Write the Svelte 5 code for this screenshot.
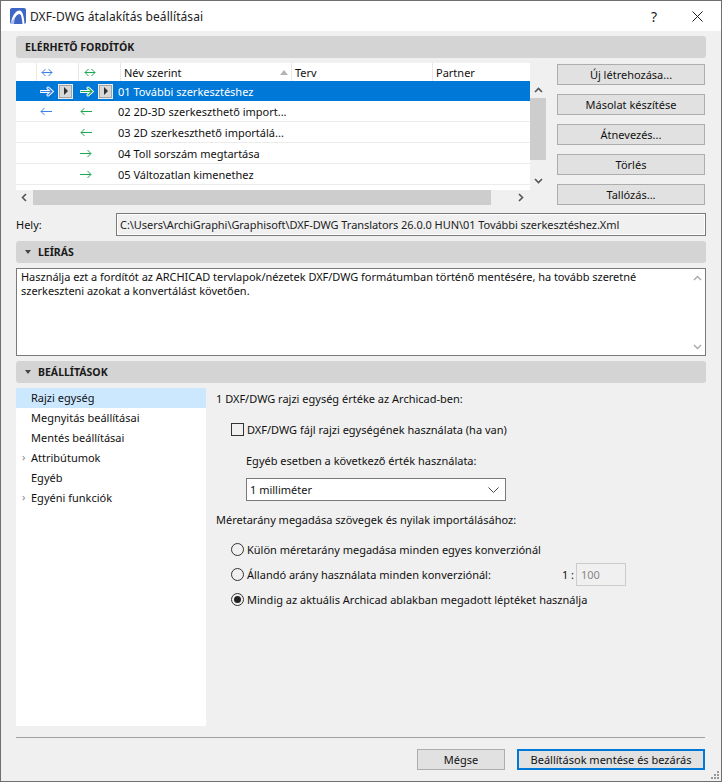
<script>
  const rows = [
    { name: '01 További szerkesztéshez', left: 'both', right: 'out', selected: true },
    { name: '02 2D-3D szerkeszthető import...', left: 'in', right: 'in' },
    { name: '03 2D szerkeszthető importálá...', left: '', right: 'in' },
    { name: '04 Toll sorszám megtartása', left: '', right: 'out' },
    { name: '05 Változatlan kimenethez', left: '', right: 'out' },
  ];
  const actions = ['Új létrehozása...', 'Másolat készítése', 'Átnevezés...', 'Törlés', 'Tallózás...'];
  const nav = [
    { label: 'Rajzi egység', active: true },
    { label: 'Megnyitás beállításai' },
    { label: 'Mentés beállításai' },
    { label: 'Attribútumok', more: true },
    { label: 'Egyéb' },
    { label: 'Egyéni funkciók', more: true },
  ];
</script>

{#snippet arrow(dir, color)}
  <svg class="arrow" width="12" height="9" viewBox="0 0 12 9" fill="none" stroke={color} stroke-width="1">
    {#if dir === 'in'}
      <path d="M1 4.5h11M4.5 1 1 4.5 4.5 8" />
    {:else if dir === 'out'}
      <path d="M0 4.5h11M7.5 1 11 4.5 7.5 8" />
    {:else}
      <path d="M1 4.5h10M4.5 1 1 4.5 4.5 8M7.5 1 11 4.5 7.5 8" />
    {/if}
  </svg>
{/snippet}

{#snippet fat(color)}
  <svg class="arrow" width="14" height="11" viewBox="0 0 14 11" fill="none" stroke-linecap="round">
    <path d="M1 5.5h10M8 2l4 3.5L8 9" stroke="#fff" stroke-width="3" />
    <path d="M1 5.5h10M8 2l4 3.5L8 9" stroke={color} stroke-width="1.2" />
  </svg>
{/snippet}

{#snippet play()}
  <span class="play"><i></i></span>
{/snippet}

<div class="window">
  <header class="titlebar">
    <svg class="logo" width="16" height="16" viewBox="0 0 16 16">
      <rect width="16" height="16" rx="2" fill="#3f66c4" />
      <path d="M1 16C2 7 6 2.5 9.5 2.5 12.5 2.5 14 8 14.5 16h-2C12 10 11 6 9.5 6 7 6 4 10 3 16Z" fill="#fff" />
      <path d="M0 16 5 9 4 16Z" fill="#a9bdea" />
    </svg>
    <span class="title">DXF-DWG átalakítás beállításai</span>
    <span class="help">?</span>
    <svg class="close" width="11" height="11" viewBox="0 0 11 11" fill="none" stroke="#222" stroke-width="1">
      <path d="M.5.5l10 10M10.5.5l-10 10" />
    </svg>
  </header>

  <main class="body">
    <div class="section plain">ELÉRHETŐ FORDÍTÓK</div>

    <div class="translators">
      <div class="list-wrap">
        <div class="list">
          <div class="thead">
            <span class="th c1"></span>
            <span class="th c2">{@render arrow('both', '#3b82e8')}</span>
            <span class="th c3">{@render arrow('both', '#1aa850')}</span>
            <span class="th c4">Név szerint<span class="sort"></span></span>
            <span class="th c5">Terv</span>
            <span class="th c6">Partner</span>
          </div>
          {#each rows as row}
            <div class="row" class:selected={row.selected}>
              <span class="cell-a">
                {#if row.selected}
                  {@render fat('#3b82e8')}{@render play()}
                {:else if row.left}
                  {@render arrow(row.left, '#3b82e8')}
                {/if}
              </span>
              <span class="cell-b">
                {#if row.selected}
                  {@render fat('#1aa850')}{@render play()}
                {:else}
                  {@render arrow(row.right, '#1aa850')}
                {/if}
              </span>
              <span class="name">{row.name}</span>
            </div>
          {/each}
        </div>
        <div class="vscroll">
          <svg width="9" height="6" viewBox="0 0 9 6" fill="none" stroke="#555" stroke-width="1.6"><path d="M1 5l3.5-3.5L8 5" /></svg>
          <div class="vtrack"><div class="vthumb"></div></div>
          <svg width="9" height="6" viewBox="0 0 9 6" fill="none" stroke="#555" stroke-width="1.6"><path d="M1 1l3.5 3.5L8 1" /></svg>
        </div>
        <div class="hscroll">
          <svg width="6" height="9" viewBox="0 0 6 9" fill="none" stroke="#555" stroke-width="1.6"><path d="M5 1 1.5 4.5 5 8" /></svg>
          <div class="hthumb"></div>
          <svg width="6" height="9" viewBox="0 0 6 9" fill="none" stroke="#555" stroke-width="1.6"><path d="M1 1l3.5 3.5L1 8" /></svg>
        </div>
      </div>
      <div class="actions">
        {#each actions as action}
          <button class="btn">{action}</button>
        {/each}
      </div>
    </div>

    <div class="location">
      <span class="location-label">Hely:</span>
      <div class="path">C:\Users\ArchiGraphi\Graphisoft\DXF-DWG Translators 26.0.0 HUN\01 További szerkesztéshez.Xml</div>
    </div>

    <div class="section"><span class="tri"></span>LEÍRÁS</div>
    <div class="desc">
      <p>Használja ezt a fordítót az ARCHICAD tervlapok/nézetek DXF/DWG formátumban történő mentésére, ha tovább szeretné szerkeszteni azokat a konvertálást követően.</p>
      <div class="desc-scroll">
        <svg width="9" height="6" viewBox="0 0 9 6" fill="none" stroke="#a8a8a8" stroke-width="1.4"><path d="M1 5l3.5-3.5L8 5" /></svg>
        <svg width="9" height="6" viewBox="0 0 9 6" fill="none" stroke="#a8a8a8" stroke-width="1.4"><path d="M1 1l3.5 3.5L8 1" /></svg>
      </div>
    </div>

    <div class="section"><span class="tri"></span>BEÁLLÍTÁSOK</div>
    <div class="settings">
      <nav class="nav">
        {#each nav as item}
          <div class="nav-item" class:active={item.active}>
            {#if item.more}<span class="chev">›</span>{/if}{item.label}
          </div>
        {/each}
      </nav>
      <div class="form">
        <div class="line">1 DXF/DWG rajzi egység értéke az Archicad-ben:</div>
        <div class="line check-line"><span class="check"></span>DXF/DWG fájl rajzi egységének használata (ha van)</div>
        <div class="line other">Egyéb esetben a következő érték használata:</div>
        <div class="select">
          <span>1 milliméter</span>
          <svg width="11" height="6" viewBox="0 0 11 6" fill="none" stroke="#444" stroke-width="1"><path d="M.5.5l5 5 5-5" /></svg>
        </div>
        <div class="line scale">Méretarány megadása szövegek és nyilak importálásához:</div>
        <div class="line radio-line first"><span class="radio"></span>Külön méretarány megadása minden egyes konverziónál</div>
        <div class="line radio-line">
          <span class="radio"></span>Állandó arány használata minden konverziónál:
          <span class="ratio">1 :</span><span class="ratio-input">100</span>
        </div>
        <div class="line radio-line"><span class="radio on"></span>Mindig az aktuális Archicad ablakban megadott léptéket használja</div>
      </div>
    </div>

    <footer class="footer">
      <button class="btn cancel">Mégse</button>
      <button class="btn primary">Beállítások mentése és bezárás</button>
    </footer>
    <svg class="grip" width="9" height="9" viewBox="0 0 9 9" fill="#9a9a9a">
      <rect x="6" y="0" width="2" height="2" /><rect x="3" y="3" width="2" height="2" /><rect x="6" y="3" width="2" height="2" />
      <rect x="0" y="6" width="2" height="2" /><rect x="3" y="6" width="2" height="2" /><rect x="6" y="6" width="2" height="2" />
    </svg>
  </main>
</div>

<style>
  :global(body) {
    margin: 0;
    background: #f0f0f0;
  }

  .window {
    position: relative;
    box-sizing: border-box;
    width: 722px;
    height: 782px;
    border: 1px solid #6f6f6f;
    background: #f0f0f0;
    font-family: "Noto Sans", "Open Sans", sans-serif;
    font-size: 11px;
    line-height: 15px;
    color: #111;
    overflow: hidden;
  }

  .titlebar {
    display: flex;
    align-items: center;
    height: 30px;
    background: #fff;
    padding-left: 9px;
  }

  .logo {
    margin-right: 4px;
  }

  .title {
    flex: 1;
    font-size: 12px;
    letter-spacing: 0.07px;
    color: #222;
  }

  .help {
    font-size: 14px;
    margin-right: 35px;
    color: #222;
  }

  .close {
    margin-right: 18px;
  }

  .body {
    padding: 5px 15px 0;
  }

  .section {
    display: flex;
    align-items: center;
    height: 22px;
    background: #d4d4d4;
    border-radius: 3px;
    padding-left: 9px;
    font-weight: 700;
    font-size: 10.5px;
    color: #1a1a1a;
  }

  .tri {
    width: 0;
    height: 0;
    margin-right: 7px;
    border: 3.5px solid transparent;
    border-top: 4px solid #444;
    border-bottom: 0;
  }

  .translators {
    display: flex;
    justify-content: space-between;
    margin-top: 5px;
  }

  .list-wrap {
    display: grid;
    grid-template-columns: 514px 16px;
    grid-template-rows: 127px 15px;
  }

  .list {
    background: #fff;
    overflow: hidden;
  }

  .thead {
    display: flex;
    height: 18px;
  }

  .th {
    box-sizing: border-box;
    display: flex;
    align-items: center;
    border-right: 1px solid #e8e8e8;
    padding-left: 3px;
    position: relative;
  }

  .c1 { width: 21px; }
  .c2 { width: 42px; padding-left: 4px; }
  .c3 { width: 42px; padding-left: 5px; }
  .c4 { width: 171px; }
  .c5 { width: 141px; }
  .c6 { width: 95px; border-right: 0; }

  .sort {
    position: absolute;
    right: 3px;
    top: 7px;
    border: 4.5px solid transparent;
    border-bottom: 5px solid #b4b4b4;
    border-top: 0;
  }

  .row {
    box-sizing: border-box;
    display: flex;
    align-items: center;
    height: 21px;
    border-bottom: 1px solid #ececec;
  }

  .row.selected {
    height: 20px;
    background: #0078d7;
    border-bottom: 0;
    color: #fff;
  }

  .cell-a {
    display: flex;
    align-items: center;
    gap: 4px;
    width: 61px;
    padding-left: 24px;
    box-sizing: border-box;
  }

  .cell-b {
    display: flex;
    align-items: center;
    gap: 4px;
    width: 41px;
    box-sizing: border-box;
    padding-left: 3px;
  }

  .name {
    white-space: nowrap;
  }

  .play {
    box-sizing: border-box;
    display: flex;
    align-items: center;
    justify-content: center;
    width: 15px;
    height: 15px;
    background: #d8d8d8;
    border: 1px solid #ececec;
    box-shadow: inset 0 0 0 1px #a4a4a4;
    flex: none;
  }

  .play i {
    border: 4.5px solid transparent;
    border-left: 4px solid #333;
    border-right: 0;
  }

  .vscroll {
    display: flex;
    flex-direction: column;
    align-items: center;
    justify-content: space-between;
    padding: 24px 0 6px;
    box-sizing: border-box;
    height: 127px;
  }

  .vtrack {
    flex: 1;
    width: 100%;
    margin-top: 5px;
  }

  .vthumb {
    width: 100%;
    height: 62px;
    background: #cdcdcd;
  }

  .hscroll {
    display: flex;
    align-items: center;
    height: 15px;
    padding-left: 5px;
    padding-right: 4px;
    box-sizing: border-box;
  }

  .hthumb {
    width: 458px;
    height: 15px;
    background: #cdcdcd;
    margin: 0 27px 0 6px;
  }

  .actions {
    display: flex;
    flex-direction: column;
    gap: 9px;
    padding-top: 1px;
    margin-right: 1px;
  }

  .btn {
    box-sizing: border-box;
    width: 148px;
    height: 21px;
    padding: 0;
    background: #e1e1e1;
    border: 1px solid #adadad;
    font: inherit;
    color: #111;
  }

  .location {
    display: flex;
    align-items: center;
    justify-content: space-between;
    margin-top: 8px;
  }

  .path {
    box-sizing: border-box;
    width: 590px;
    height: 23px;
    line-height: 21px;
    padding-left: 3px;
    background: #f0f0f0;
    border: 1px solid #7a7a7a;
    box-shadow: inset 0 0 0 1px #fff;
    letter-spacing: -0.06px;
    color: #222;
    white-space: nowrap;
    overflow: hidden;
  }

  .location + .section {
    margin-top: 5px;
  }

  .desc {
    position: relative;
    box-sizing: border-box;
    height: 88px;
    margin: 5px 0 5px;
    padding: 1px 20px 0 4px;
    background: #fff;
    border: 1px solid #7a7a7a;
  }

  .desc p {
    margin: 0;
    line-height: 14px;
    letter-spacing: -0.03px;
  }

  .desc-scroll {
    position: absolute;
    top: 6px;
    right: 3px;
    bottom: 5px;
    display: flex;
    flex-direction: column;
    justify-content: space-between;
  }

  .settings {
    display: flex;
    margin-top: 5px;
  }

  .nav {
    width: 190px;
    height: 338px;
    background: #fff;
    flex: none;
  }

  .nav-item {
    position: relative;
    height: 20px;
    line-height: 20px;
    padding-left: 15px;
  }

  .nav-item.active {
    background: #cce8ff;
  }

  .chev {
    position: absolute;
    left: 6px;
    top: -1px;
    color: #888;
  }

  .form {
    padding: 3px 0 0 10px;
    flex: 1;
  }

  .line {
    display: flex;
    align-items: center;
    height: 15px;
    white-space: nowrap;
  }

  .check-line {
    margin: 16px 0 0 15px;
    height: 15px;
  }

  .check {
    box-sizing: border-box;
    width: 13px;
    height: 13px;
    border: 1px solid #333;
    background: #f0f0f0;
    margin-right: 3px;
  }

  .other {
    margin: 16px 0 0 30px;
  }

  .select {
    box-sizing: border-box;
    display: flex;
    align-items: center;
    justify-content: space-between;
    width: 260px;
    height: 23px;
    margin: 10px 0 0 30px;
    padding: 0 3px 0 3px;
    background: #fff;
    border: 1px solid #7a7a7a;
  }

  .select svg {
    margin-right: 3px;
  }

  .scale {
    margin-top: 11px;
  }

  .radio-line {
    margin: 9px 0 0 15px;
    height: 16px;
  }

  .radio-line.first {
    margin-top: 14px;
  }

  .radio {
    box-sizing: border-box;
    position: relative;
    width: 13px;
    height: 13px;
    border: 1px solid #333;
    border-radius: 50%;
    margin-right: 3px;
  }

  .radio.on::after {
    content: '';
    position: absolute;
    inset: 2px;
    border-radius: 50%;
    background: #222;
  }

  .ratio {
    margin-left: 71px;
    margin-right: 2px;
  }

  .ratio-input {
    box-sizing: border-box;
    width: 50px;
    height: 23px;
    line-height: 21px;
    padding-left: 4px;
    background: #f0f0f0;
    border: 1px solid #ccc;
    color: #888;
  }

  .footer {
    display: flex;
    justify-content: flex-end;
    gap: 12px;
    margin-top: 11px;
    margin-right: 1px;
    padding-top: 11px;
    border-top: 1px solid #a0a0a0;
  }

  .cancel {
    width: 88px;
  }

  .primary {
    width: 188px;
    border: 2px solid #0078d7;
  }

  .grip {
    position: absolute;
    right: 1px;
    bottom: 1px;
  }
</style>
